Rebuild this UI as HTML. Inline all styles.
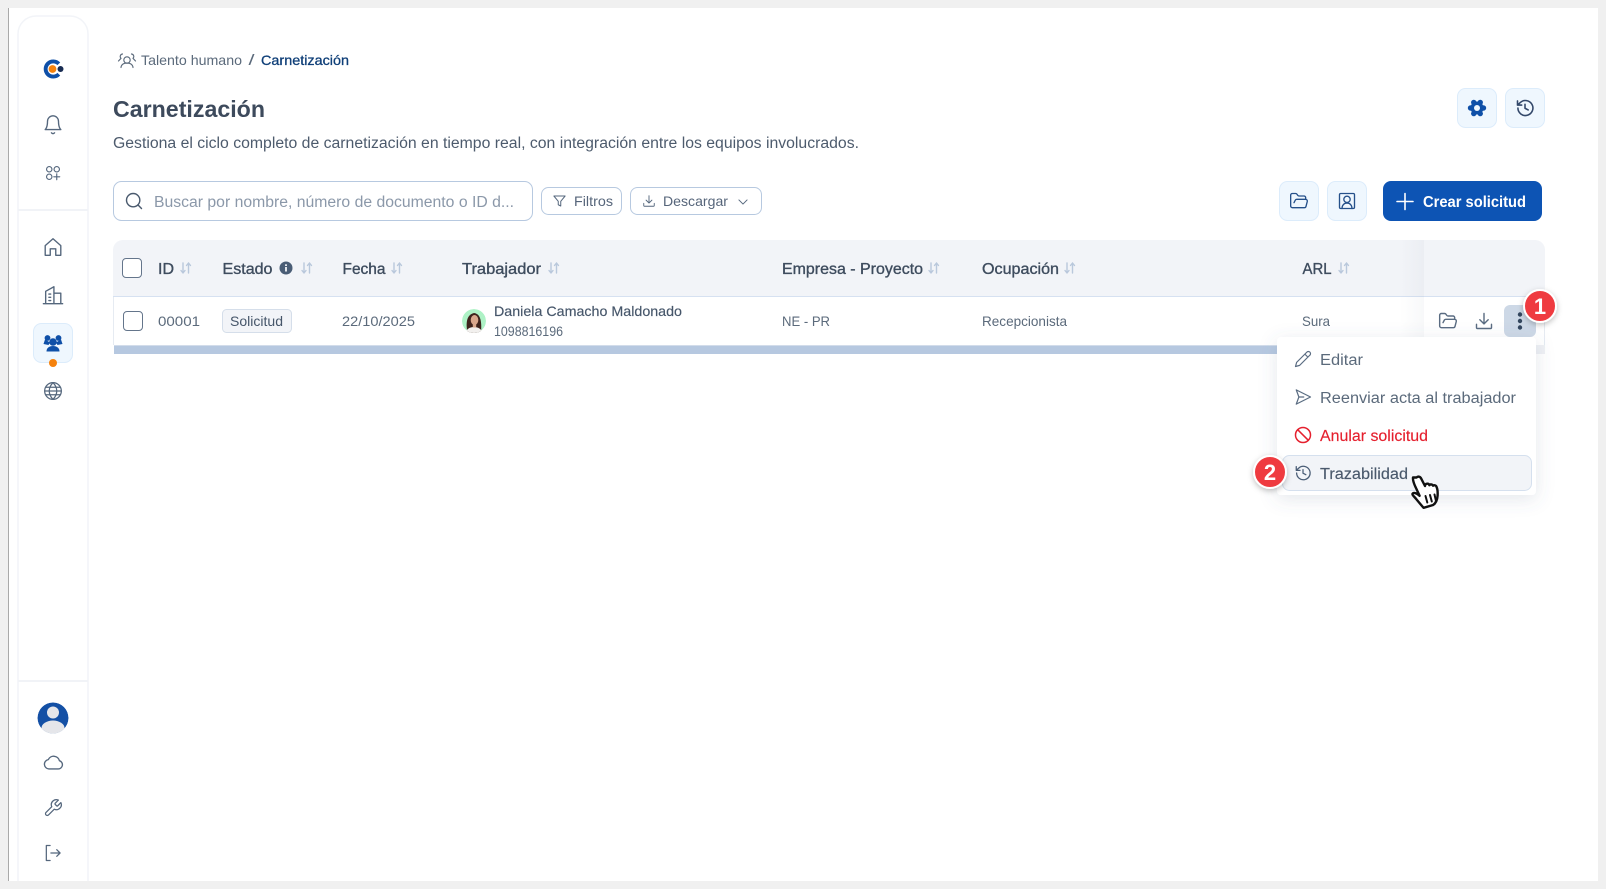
<!DOCTYPE html>
<html lang="es">
<head>
<meta charset="utf-8">
<title>Carnetización</title>
<style>
html,body{margin:0;padding:0;background:#f0f0f0;width:1606px;height:889px;overflow:hidden}
svg{display:block}
text{font-family:"Liberation Sans",sans-serif}
.i{fill:none;stroke-linecap:round;stroke-linejoin:round}
.hd{font-size:15.5px;font-weight:400;fill:#3e4c5e;stroke:#3e4c5e;stroke-width:.35}
.srt{fill:none;stroke:#b9c8dc;stroke-width:1.4;stroke-linecap:round;stroke-linejoin:round}
</style>
</head>
<body>
<svg width="1606" height="889" viewBox="0 0 1606 889" xmlns="http://www.w3.org/2000/svg">
<defs>
<symbol id="bell" viewBox="0 0 24 24"><path d="M6 8a6 6 0 0 1 12 0c0 7 2.500 9 2.500 9h-17S6 15 6 8M10.300 20.500a2 2 0 0 0 3.400 0"/></symbol>
<symbol id="apps" viewBox="0 0 24 24"><circle cx="7" cy="7" r="3.600"/><circle cx="17" cy="7" r="3.600"/><circle cx="7" cy="17" r="3.600"/><path d="M17 13v8M13 17h8"/></symbol>
<symbol id="home" viewBox="0 0 24 24"><path d="M3.500 10.500 12 3l8.500 7.500V21H15v-7H9v7H3.500z"/></symbol>
<symbol id="bld" viewBox="0 0 24 24"><path d="M1.500 21.500h21M4 21.500V8l9-5v18.500M13 10h7.500v11.500M7.500 11h2M7.500 14.500h2M7.500 18h2"/></symbol>
<symbol id="globe" viewBox="0 0 24 24"><circle cx="12" cy="12" r="10"/><path d="M2 12h20M3.500 7.500h17M3.500 16.500h17M12 2c-6 6-6 14 0 20M12 2c6 6 6 14 0 20"/></symbol>
<symbol id="cloud" viewBox="0 0 24 24"><path d="M17.500 18.500H7.500a5.200 5.200 0 0 1-.6-10.300A6.500 6.500 0 0 1 19 9.500a4.600 4.600 0 0 1-1.500 9z"/></symbol>
<symbol id="wrench" viewBox="0 0 24 24"><path d="M14.700 6.300a1 1 0 0 0 0 1.400l1.600 1.600a1 1 0 0 0 1.400 0l3.770-3.770a6 6 0 0 1-7.940 7.940l-6.910 6.910a2.120 2.120 0 0 1-3-3l6.910-6.910a6 6 0 0 1 7.940-7.940l-3.760 3.760z"/></symbol>
<symbol id="logout" viewBox="0 0 24 24"><path d="M8.500 3H4v18h4.500M9.500 12h11M16.500 8l4 4-4 4"/></symbol>
<symbol id="search" viewBox="0 0 24 24"><circle cx="11" cy="11" r="8"/><path d="m21 21-4.300-4.300"/></symbol>
<symbol id="filter" viewBox="0 0 24 24"><path d="M3 4h18l-7 8.500V20l-4-2v-5.500z"/></symbol>
<symbol id="dl" viewBox="0 0 24 24"><path d="M12 3v12.500M7 10.500l5 5 5-5M3 16v4a1 1 0 0 0 1 1h16a1 1 0 0 0 1-1v-4"/></symbol>
<symbol id="chev" viewBox="0 0 24 24"><path d="m5 8.500 7 7 7-7"/></symbol>
<symbol id="folder" viewBox="0 0 24 24"><path d="m6 14 1.500-2.900A2 2 0 0 1 9.240 10H20a2 2 0 0 1 1.940 2.500l-1.540 6a2 2 0 0 1-1.950 1.500H4a2 2 0 0 1-2-2V5a2 2 0 0 1 2-2h3.900a2 2 0 0 1 1.690.9l.81 1.200a2 2 0 0 0 1.670.9H18a2 2 0 0 1 2 2v2"/></symbol>
<symbol id="contact" viewBox="0 0 24 24"><rect x="3" y="3" width="18" height="18" rx="1.500"/><circle cx="12" cy="10" r="3.800"/><path d="M6 21c0-4 2.500-6.500 6-6.500s6 2.500 6 6.500"/></symbol>
<symbol id="hist" viewBox="0 0 24 24"><path d="M3.500 12a9 9 0 1 0 2.800-6.500L3 8.500M3 3.500v5h5M12 7.500v4.800l3.800 2"/></symbol>
<symbol id="pencil" viewBox="0 0 24 24"><path d="M17 3a2.850 2.830 0 1 1 4 4L7.500 20.500 2 22l1.500-5.500zM14.500 5.500l4 4"/></symbol>
<symbol id="send" viewBox="0 0 24 24"><path d="m3 2.500 3.500 9.500L3 21.500 22 12zM6.500 12H13"/></symbol>
<symbol id="ban" viewBox="0 0 24 24"><circle cx="12" cy="12" r="10"/><path d="m4.900 4.900 14.200 14.200"/></symbol>
<linearGradient id="sh" x1="0" x2="1" y1="0" y2="0"><stop offset="0" stop-color="#5a6c85" stop-opacity="0"/><stop offset="1" stop-color="#5a6c85" stop-opacity=".045"/></linearGradient>
<filter id="menu" x="-20%" y="-20%" width="140%" height="150%"><feDropShadow dx="0" dy="4" stdDeviation="9" flood-color="#5a6c85" flood-opacity=".16"/></filter>
<filter id="bd" x="-50%" y="-50%" width="200%" height="200%"><feDropShadow dx="0" dy="2" stdDeviation="3" flood-color="#000" flood-opacity=".25"/></filter>
<clipPath id="av"><circle cx="474" cy="321" r="12"/></clipPath>
<clipPath id="uav"><circle cx="53" cy="718" r="15.500"/></clipPath>
</defs>

<!-- page frame -->
<rect x="0" y="0" width="1606" height="889" fill="#f0f0f0"/>
<rect x="9" y="8" width="1589" height="873" fill="#fff"/>
<rect x="8" y="8" width="1" height="873" fill="#a9a9a9"/>

<!-- sidebar -->
<path d="M88 881V34a18 18 0 0 0-18-18H36a18 18 0 0 0-18 18v847" fill="#fff" stroke="#f2f4f8" stroke-width="1.500"/>
<rect x="18" y="209" width="70" height="2" fill="#f1f3f7"/>
<rect x="18" y="680" width="70" height="2" fill="#f1f3f7"/>

<!-- logo -->
<path d="M58.800 63.800a7.600 7.600 0 1 0 0 10.400" fill="none" stroke="#0f50a8" stroke-width="3.900"/>
<circle cx="52.500" cy="69" r="3.900" fill="#f5820d"/>
<circle cx="60.500" cy="69" r="3" fill="#182c52"/>

<g class="i" style="stroke:#55677d;stroke-width:1.500">
<use href="#bell" x="42" y="114" width="22" height="22"/>
<use href="#apps" x="44" y="164" width="18" height="18"/>
<use href="#home" x="42" y="236" width="22" height="22"/>
<use href="#bld" x="42" y="284" width="22" height="22"/>
<use href="#globe" x="43" y="381" width="20" height="20"/>
<use href="#cloud" x="42" y="752" width="22" height="22"/>
<use href="#wrench" x="43" y="798" width="20" height="20"/>
<use href="#logout" x="43" y="843" width="20" height="20"/>
</g>

<!-- active tile -->
<rect x="33.500" y="323.500" width="39" height="39" rx="8" fill="#eff7fe" stroke="#dcecfb"/>
<g fill="#0f50a8">
<circle cx="47.500" cy="338" r="2.900"/><circle cx="58.500" cy="338" r="2.900"/>
<path d="M45 339.500l-1.500 4.500 5 1 1.500-2.500zM61 339.500l1.500 4.500-5 1-1.500-2.500z"/>
<circle cx="53" cy="342" r="3.800"/>
<path d="M46.500 351.500c0-3.500 2.500-5.500 6.500-5.500s6.500 2 6.500 5.500z"/>
</g>
<circle cx="53" cy="363" r="4" fill="#f5820d"/>

<!-- user avatar -->
<g clip-path="url(#uav)">
<circle cx="53" cy="718" r="15.500" fill="#1450a5"/>
<circle cx="53" cy="712.500" r="6" fill="#e5e6ea"/>
<ellipse cx="53" cy="728" rx="11.500" ry="7.500" fill="#e5e6ea"/>
</g>

<!-- breadcrumb -->
<g class="i" style="stroke:#5b6a7b;stroke-width:1.150">
<circle cx="127" cy="60" r="3.200"/>
<path d="M121 67.500c.3-3 2.800-4.500 6-4.500s5.700 1.500 6 4.500"/>
<path d="M122.500 54a2.500 2.500 0 0 0-1.500 4.300l-2.500 2.700M131.500 54a2.500 2.500 0 0 1 1.500 4.300l2.500 2.700"/>
</g>
<text x="141" y="65" font-size="14" fill="#5b6a7b" textLength="101" lengthAdjust="spacingAndGlyphs">Talento humano</text>
<text x="248.500" y="65" font-size="14.500" fill="#5b6a7b" textLength="6" lengthAdjust="spacingAndGlyphs">/</text>
<text x="261" y="65" font-size="14" fill="#0f3f78" stroke="#0f3f78" stroke-width=".3" textLength="88" lengthAdjust="spacingAndGlyphs">Carnetización</text>

<!-- title -->
<text x="113" y="117" font-size="23" font-weight="700" fill="#3d4a5c" textLength="152" lengthAdjust="spacingAndGlyphs">Carnetización</text>
<text x="113" y="148" font-size="15.500" fill="#4d5b6d" textLength="746" lengthAdjust="spacingAndGlyphs">Gestiona el ciclo completo de carnetización en tiempo real, con integración entre los equipos involucrados.</text>

<!-- top right buttons -->
<rect x="1457.500" y="88.500" width="39" height="39" rx="8" fill="#eff7fe" stroke="#dcecfb"/>
<rect x="1505.500" y="88.500" width="39" height="39" rx="8" fill="#eff7fe" stroke="#dcecfb"/>
<g fill="#0f50a8">
<circle cx="1477" cy="108" r="6.500"/>
<circle cx="1483.500" cy="108" r="2.700"/><circle cx="1470.500" cy="108" r="2.700"/>
<circle cx="1473.750" cy="102.400" r="2.700"/><circle cx="1480.250" cy="102.400" r="2.700"/>
<circle cx="1473.750" cy="113.600" r="2.700"/><circle cx="1480.250" cy="113.600" r="2.700"/>
</g>
<circle cx="1477" cy="108" r="3" fill="#eff7fe"/>
<g class="i" style="stroke:#33486a;stroke-width:1.900"><use href="#hist" x="1515" y="98" width="20" height="20"/></g>

<!-- toolbar -->
<rect x="113.500" y="181.500" width="419" height="39" rx="8" fill="#fff" stroke="#b7c9e0"/>
<g class="i" style="stroke:#4a5a6e;stroke-width:1.700"><use href="#search" x="124" y="191" width="20" height="20"/></g>
<text x="154" y="207" font-size="15.500" fill="#8b98a9" textLength="360" lengthAdjust="spacingAndGlyphs">Buscar por nombre, número de documento o ID d...</text>

<rect x="541.500" y="187.500" width="80" height="27" rx="7" fill="#fff" stroke="#b7c9e0"/>
<g class="i" style="stroke:#55677d;stroke-width:1.600"><use href="#filter" x="552" y="193.500" width="15" height="15"/></g>
<text x="574" y="206" font-size="14" fill="#56657a" textLength="39" lengthAdjust="spacingAndGlyphs">Filtros</text>

<rect x="630.500" y="187.500" width="131" height="27" rx="7" fill="#fff" stroke="#b7c9e0"/>
<g class="i" style="stroke:#55677d;stroke-width:1.600"><use href="#dl" x="642" y="194" width="14" height="14"/></g>
<text x="663" y="206" font-size="14" fill="#56657a" textLength="65" lengthAdjust="spacingAndGlyphs">Descargar</text>
<g class="i" style="stroke:#55677d;stroke-width:1.700"><use href="#chev" x="736" y="195" width="14" height="14"/></g>

<rect x="1279.500" y="181.500" width="39" height="39" rx="8" fill="#eff7fe" stroke="#dcecfb"/>
<rect x="1327.500" y="181.500" width="39" height="39" rx="8" fill="#eff7fe" stroke="#dcecfb"/>
<g class="i" style="stroke:#25508a;stroke-width:1.600">
<use href="#folder" x="1289" y="191" width="20" height="20"/>
<use href="#contact" x="1337" y="191" width="20" height="20"/>
</g>
<rect x="1383" y="181" width="159" height="40" rx="8" fill="#0d54b4"/>
<path d="M1405 193.500v16M1397 201.500h16" stroke="#fff" stroke-width="1.600" stroke-linecap="round"/>
<text x="1423" y="207" font-size="16" font-weight="700" fill="#fff" textLength="103" lengthAdjust="spacingAndGlyphs">Crear solicitud</text>

<!-- table -->
<path d="M113 296v-46a10 10 0 0 1 10-10h1412a10 10 0 0 1 10 10v46z" fill="#f2f4f8"/>
<rect x="113" y="296" width="1432" height="1" fill="#d6e1f1"/>
<rect x="113" y="297" width="1" height="48" fill="#e6ebf2"/>
<rect x="1544" y="297" width="1" height="48" fill="#e6ebf2"/>
<rect x="114" y="345" width="1431" height="9" fill="#eef0f4"/>
<rect x="114" y="345.500" width="1230" height="8.500" fill="#b6c8e0"/>
<rect x="1400" y="240" width="24" height="105" fill="url(#sh)"/>

<!-- header -->
<rect x="122.500" y="258.500" width="19" height="19" rx="3.500" fill="#fff" stroke="#64758b" stroke-width="1"/>
<text class="hd" x="158" y="274" textLength="16" lengthAdjust="spacingAndGlyphs">ID</text>
<text class="hd" x="222.500" y="274" textLength="50" lengthAdjust="spacingAndGlyphs">Estado</text>
<circle cx="286" cy="268" r="6.500" fill="#4a5d76"/>
<rect x="285.100" y="267" width="1.800" height="4.500" fill="#f2f4f8"/><rect x="285.100" y="264.300" width="1.800" height="1.700" fill="#f2f4f8"/>
<text class="hd" x="342.500" y="274" textLength="43" lengthAdjust="spacingAndGlyphs">Fecha</text>
<text class="hd" x="462" y="274" textLength="79" lengthAdjust="spacingAndGlyphs">Trabajador</text>
<text class="hd" x="782" y="274" textLength="141" lengthAdjust="spacingAndGlyphs">Empresa - Proyecto</text>
<text class="hd" x="982" y="274" textLength="77" lengthAdjust="spacingAndGlyphs">Ocupación</text>
<text class="hd" x="1302.500" y="274" textLength="29" lengthAdjust="spacingAndGlyphs">ARL</text>

<g class="srt">
<path d="M183 263v10l-2-2.500M183 273l2-2.500M188.500 273v-10l-2 2.500M188.500 263l2 2.500"/>
<path d="M304 263v10l-2-2.500M304 273l2-2.500M309.500 273v-10l-2 2.500M309.500 263l2 2.500"/>
<path d="M394 263v10l-2-2.500M394 273l2-2.500M399.500 273v-10l-2 2.500M399.500 263l2 2.500"/>
<path d="M551 263v10l-2-2.500M551 273l2-2.500M556.500 273v-10l-2 2.500M556.500 263l2 2.500"/>
<path d="M931 263v10l-2-2.500M931 273l2-2.500M936.500 273v-10l-2 2.500M936.500 263l2 2.500"/>
<path d="M1067 263v10l-2-2.500M1067 273l2-2.500M1072.500 273v-10l-2 2.500M1072.500 263l2 2.500"/>
<path d="M1341 263v10l-2-2.500M1341 273l2-2.500M1346.500 273v-10l-2 2.500M1346.500 263l2 2.500"/>
</g>

<!-- row -->
<rect x="123.500" y="311.500" width="19" height="19" rx="3.500" fill="#fff" stroke="#64758b" stroke-width="1"/>
<text x="158" y="326" font-size="14" fill="#5b6a7b" textLength="42" lengthAdjust="spacingAndGlyphs">00001</text>
<rect x="222.500" y="309.500" width="69" height="23" rx="4" fill="#f2f4f8" stroke="#d5deea"/>
<text x="230" y="326" font-size="14" fill="#46566a" textLength="53" lengthAdjust="spacingAndGlyphs">Solicitud</text>
<text x="342" y="326" font-size="14" fill="#5b6a7b" textLength="73" lengthAdjust="spacingAndGlyphs">22/10/2025</text>

<g clip-path="url(#av)">
<circle cx="474" cy="321" r="12" fill="#aef2c6"/>
<path d="M467.500 333c-1.500-8-2-18 6.500-20 8 1 7.500 12 7 20z" fill="#3e231c"/>
<ellipse cx="474.500" cy="320" rx="3.800" ry="5" fill="#d9a78c"/>
<path d="M465 334c1-5 5-7 9-7s8 2 9 7z" fill="#f2f0ee"/>
<rect x="472.800" y="323.500" width="3.400" height="4" fill="#d9a78c"/>
</g>
<text x="494" y="316" font-size="14" fill="#46566a" stroke="#46566a" stroke-width=".15" textLength="188" lengthAdjust="spacingAndGlyphs">Daniela Camacho Maldonado</text>
<text x="494" y="336" font-size="14" fill="#5b6a7b" textLength="69" lengthAdjust="spacingAndGlyphs">1098816196</text>
<text x="782" y="326" font-size="14" fill="#5b6a7b" textLength="48" lengthAdjust="spacingAndGlyphs">NE - PR</text>
<text x="982" y="326" font-size="14" fill="#5b6a7b" textLength="85" lengthAdjust="spacingAndGlyphs">Recepcionista</text>
<text x="1302" y="326" font-size="14" fill="#5b6a7b" textLength="28" lengthAdjust="spacingAndGlyphs">Sura</text>

<g class="i" style="stroke:#5a6c82;stroke-width:1.700"><use href="#folder" x="1438" y="311" width="20" height="20"/><use href="#dl" x="1474" y="311" width="20" height="20"/></g>
<rect x="1504" y="305" width="32" height="32" rx="6" fill="#cdd8e6"/>
<circle cx="1520" cy="314.500" r="2.200" fill="#33465e"/><circle cx="1520" cy="321" r="2.200" fill="#33465e"/><circle cx="1520" cy="327.500" r="2.200" fill="#33465e"/>

<!-- menu -->
<rect x="1277" y="337" width="259" height="158" rx="4" fill="#fff" filter="url(#menu)"/>
<g class="i" style="stroke:#5a6c82;stroke-width:1.600"><use href="#pencil" x="1294" y="350" width="18" height="18"/><use href="#send" x="1294" y="388" width="18" height="18"/></g>
<text x="1320" y="365" font-size="15.500" fill="#5b6a7b" textLength="43" lengthAdjust="spacingAndGlyphs">Editar</text>
<text x="1320" y="403" font-size="15.500" fill="#5b6a7b" textLength="196" lengthAdjust="spacingAndGlyphs">Reenviar acta al trabajador</text>
<g class="i" style="stroke:#e5202e;stroke-width:2"><use href="#ban" x="1294" y="426" width="18" height="18"/></g>
<text x="1320" y="441" font-size="15.500" fill="#e5202e" stroke="#e5202e" stroke-width=".15" textLength="108" lengthAdjust="spacingAndGlyphs">Anular solicitud</text>
<rect x="1282.500" y="455.500" width="249" height="35" rx="7" fill="#f2f4f8" stroke="#d5e0ee"/>
<g class="i" style="stroke:#4a5d76;stroke-width:1.700"><use href="#hist" x="1294" y="464" width="18" height="18"/></g>
<text x="1320" y="479" font-size="15.500" fill="#4a596c" stroke="#4a596c" stroke-width=".15" textLength="88" lengthAdjust="spacingAndGlyphs">Trazabilidad</text>

<!-- hand cursor -->
<g transform="translate(2 0)">
<path d="M1414.500 477.500c1.800-1.800 4-.6 4.800 1.300l3.700 7.200.4-1.500c1.400-1.500 3.500-.8 4 .7.800-1.300 3-1 3.700.5 1-.9 3-.5 3.500 1.300.8 1.800 1.200 5 1 8.500-.3 4.500-1.500 7.500-4.500 9.500l-9.500 2.800c-2.500-2.800-5.500-6.500-8-9.500-1.500-1.800-3.700-3.500-3-4.700 1-1.200 3.700-.5 5.500 1l1.500 1.200-4.200-9c-1.200-2.800-2.800-6-2.400-9.300z" fill="#fff" stroke="#111" stroke-width="2.400" stroke-linejoin="round"/>
<path d="M1423.500 496l1.800 6.500M1428 495l1.800 6.500M1432.500 494.500l1.500 6.500" stroke="#111" stroke-width="2" stroke-linecap="round" fill="none"/>
</g>

<!-- badges -->
<g filter="url(#bd)"><circle cx="1540" cy="306" r="16" fill="#ef3b3f" stroke="#fff" stroke-width="2"/></g>
<text x="1540" y="314" font-size="22" font-weight="700" fill="#fff" text-anchor="middle">1</text>
<g filter="url(#bd)"><circle cx="1270" cy="472" r="16" fill="#ef3b3f" stroke="#fff" stroke-width="2"/></g>
<text x="1270" y="480" font-size="22" font-weight="700" fill="#fff" text-anchor="middle">2</text>
</svg>
</body>
</html>
